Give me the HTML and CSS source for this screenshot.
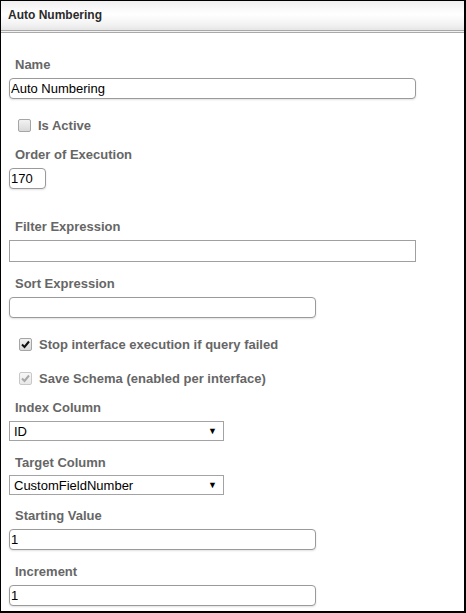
FILE: index.html
```html
<!DOCTYPE html>
<html>
<head>
    <meta charset="UTF-8">
    <title>Auto Numbering</title>
    <link rel="stylesheet" href="styles.css">
</head>
<body>
    <div class="panel">
        <div class="panel-head">Auto Numbering</div>
        <div class="form">
            <div class="field">
                <label class="lbl">Name</label>
                <input class="txt round wide" type="text" value="Auto Numbering">
            </div>
            <div class="check first">
                <span class="box"></span>
                <span class="check-lbl">Is Active</span>
            </div>
            <div class="field">
                <label class="lbl">Order of Execution</label>
                <input class="txt round tiny" type="text" value="170">
            </div>
            <div class="field spaced">
                <label class="lbl">Filter Expression</label>
                <input class="txt wide tall" type="text" value="">
            </div>
            <div class="field">
                <label class="lbl">Sort Expression</label>
                <input class="txt round mid" type="text" value="">
            </div>
            <div class="check shift">
                <span class="box on">
                    <svg width="9" height="9" viewBox="0 0 9 9"><path d="M1 4.5 L3.5 7 L8 1.5" fill="none" stroke="#111" stroke-width="2"/></svg>
                </span>
                <span class="check-lbl">Stop interface execution if query failed</span>
            </div>
            <div class="check shift">
                <span class="box off">
                    <svg width="9" height="9" viewBox="0 0 9 9"><path d="M1 4.5 L3.5 7 L8 1.5" fill="none" stroke="#a8a8a8" stroke-width="2"/></svg>
                </span>
                <span class="check-lbl">Save Schema (enabled per interface)</span>
            </div>
            <div class="field">
                <label class="lbl">Index Column</label>
                <div class="sel"><span>ID</span><span class="arrow">&#9660;</span></div>
            </div>
            <div class="field">
                <label class="lbl close">Target Column</label>
                <div class="sel"><span>CustomFieldNumber</span><span class="arrow">&#9660;</span></div>
            </div>
            <div class="field near">
                <label class="lbl">Starting Value</label>
                <input class="txt round mid" type="text" value="1">
            </div>
            <div class="field">
                <label class="lbl">Increment</label>
                <input class="txt round mid" type="text" value="1">
            </div>
        </div>
    </div>
</body>
</html>
```

FILE: styles.css
```css
*{
    margin: 0;
    padding: 0;
    box-sizing: border-box;
}
html,body{
    width: 100%;
    height: 100%;
    background: #fff;
    font-family: "Liberation Sans", Arial, sans-serif;
}
.panel{
    height: 613px;
    border: 1px solid #000;
    border-right-width: 2px;
    border-bottom-width: 2px;
    background: #fff;
}
.panel-head{
    height: 32px;
    line-height: 28px;
    padding-left: 7px;
    font-size: 12px;
    font-weight: bold;
    color: #2b2b2b;
    background: linear-gradient(#f0f0f0, #ffffff 45%, #f3f3f3 80%, #e6e6e6);
    border-bottom: 3px double #a9a9a9;
}
.form{
    padding: 24px 0 0 8px;
}
.field{
    margin-top: 14px;
}
.field:first-child{
    margin-top: 0;
}
.field.spaced{
    margin-top: 30px;
}
.field.near{
    margin-top: 13px;
}
.lbl{
    display: block;
    padding-left: 6px;
    height: 16px;
    line-height: 16px;
    margin-bottom: 5px;
    font-size: 13px;
    font-weight: bold;
    color: #666;
}
.lbl.close{
    margin-bottom: 4px;
}
.txt{
    display: block;
    height: 21px;
    padding: 0 1px;
    font-family: "Liberation Sans", Arial, sans-serif;
    font-size: 13px;
    color: #000;
    border: 1px solid #a0a0a0;
    background: #fff;
    outline: none;
}
.txt.round{
    border-radius: 4px;
    border-color: #9a9a9a;
    box-shadow: 0 1px 2px rgba(0,0,0,.12);
}
.txt.tall{
    height: 22px;
}
.wide{
    width: 407px;
}
.mid{
    width: 307px;
}
.tiny{
    width: 37px;
}
.check{
    display: flex;
    align-items: center;
    height: 16px;
    margin-top: 18px;
    padding-left: 9px;
}
.check.first{
    margin-bottom: 14px;
}
.check.first + .field{
    margin-top: 0;
}
.check.shift{
    padding-left: 10px;
}
.box{
    display: flex;
    align-items: center;
    justify-content: center;
    width: 13px;
    height: 13px;
    border: 1px solid #a5a5a5;
    border-radius: 2px;
    background: linear-gradient(#f2f2f2, #d9d9d9);
}
.box.off{
    border-color: #c8c8c8;
    background: linear-gradient(#f7f7f7, #e8e8e8);
}
.box svg{
    display: block;
}
.check-lbl{
    margin-left: 7px;
    font-size: 13px;
    font-weight: bold;
    color: #666;
}
.sel{
    display: flex;
    justify-content: space-between;
    align-items: center;
    width: 215px;
    height: 20px;
    padding: 0 6px 0 4px;
    font-size: 13px;
    color: #000;
    border: 1px solid #a3a3a3;
    background: #fff;
}
.arrow{
    font-size: 9px;
}
```
